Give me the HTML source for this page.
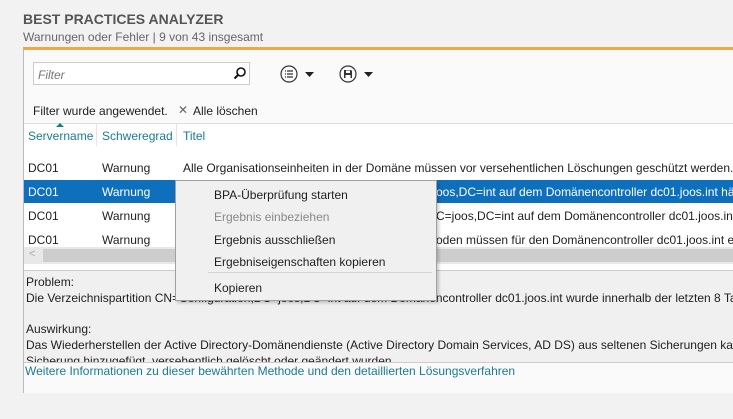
<!DOCTYPE html>
<html><head><meta charset="utf-8"><style>
body{margin:0;width:733px;height:419px;overflow:hidden;background:#f2f2f2;font-family:"Liberation Sans",sans-serif;font-size:12px;color:#1e1e1e;position:relative}
.a{position:absolute;white-space:nowrap}
</style></head><body>
<div class="a" style="left:23px;top:11px;font-weight:bold;font-size:14px;color:#555">BEST PRACTICES ANALYZER</div>
<div class="a" style="left:23px;top:30px;color:#666">Warnungen oder Fehler | 9 von 43 insgesamt</div>
<div class="a" style="left:23px;top:47px;width:720px;height:346px;background:#fafafa;border:1px solid #bbb;border-top:none;box-sizing:border-box"></div>
<div class="a" style="left:23px;top:47px;width:720px;height:3px;background:#efa941"></div>
<div class="a" style="left:33px;top:62px;width:217px;height:23px;background:#fff;border:1px solid #ccc;box-sizing:border-box"></div>
<div class="a" style="left:38px;top:68px;font-style:italic;color:#777">Filter</div>
<svg class="a" style="left:233px;top:66px" width="14" height="14"><circle cx="8" cy="6" r="4" fill="none" stroke="#111" stroke-width="1.6"/><path d="M5 9L1.5 12.5" stroke="#111" stroke-width="2"/></svg>
<svg class="a" style="left:279px;top:64px" width="40" height="20"><circle cx="10" cy="10" r="8" fill="none" stroke="#333" stroke-width="1.2"/><path d="M6 7h1M8 7h6M6 10h1M8 10h6M6 13h1M8 13h6" stroke="#333" stroke-width="1.2"/><path d="M26 8h9l-4.5 5z" fill="#222"/></svg>
<svg class="a" style="left:338px;top:64px" width="40" height="20"><circle cx="10" cy="10" r="8" fill="none" stroke="#333" stroke-width="1.2"/><path d="M6 6h7l1 1v7h-8z" fill="#333"/><rect x="8" y="6.5" width="4" height="2.5" fill="#fff"/><rect x="7.5" y="11" width="5" height="3" fill="#fff"/><path d="M26 8h9l-4.5 5z" fill="#222"/></svg>
<div class="a" style="left:33px;top:104px">Filter wurde angewendet.</div>
<div class="a" style="left:178px;top:103px;color:#666">✕</div>
<div class="a" style="left:193px;top:104px">Alle löschen</div>
<div class="a" style="left:24px;top:123px;width:719px;height:147px;background:#fff;border-top:1px solid #ddd"></div>
<div class="a" style="left:96px;top:124px;width:1px;height:22px;background:#e5e5e5"></div>
<div class="a" style="left:176px;top:124px;width:1px;height:22px;background:#e5e5e5"></div>
<svg class="a" style="left:56px;top:123px" width="8" height="5"><path d="M0 4L4 0L8 4z" fill="#1a7b8a"/></svg>
<div class="a" style="left:28px;top:129px;color:#1a7b94">Servername</div>
<div class="a" style="left:102px;top:129px;color:#1a7b94">Schweregrad</div>
<div class="a" style="left:183px;top:129px;color:#1a7b94">Titel</div>
<div class="a" style="left:28px;top:161px">DC01</div><div class="a" style="left:102px;top:161px">Warnung</div><div class="a" style="left:183px;top:161px">Alle Organisationseinheiten in der Domäne müssen vor versehentlichen Löschungen geschützt werden.</div>
<div class="a" style="left:24px;top:180px;width:719px;height:23px;background:#0e6fbd"></div>
<div class="a" style="left:28px;top:185px;color:#fff">DC01</div><div class="a" style="left:102px;top:185px;color:#fff">Warnung</div><div class="a" style="left:436px;top:185px;color:#fff">oos,DC=int auf dem Domänencontroller dc01.joos.int hä</div>
<div class="a" style="left:28px;top:209px">DC01</div><div class="a" style="left:102px;top:209px">Warnung</div><div class="a" style="left:436px;top:209px">C=joos,DC=int auf dem Domänencontroller dc01.joos.int</div>
<div class="a" style="left:28px;top:233px">DC01</div><div class="a" style="left:102px;top:233px">Warnung</div><div class="a" style="left:436px;top:233px">oden müssen für den Domänencontroller dc01.joos.int ei</div>
<div class="a" style="left:24px;top:247px;width:719px;height:17px;background:#e8e8e8"></div>
<div class="a" style="left:43px;top:249px;width:700px;height:13px;background:#cdcdcd"></div>
<div class="a" style="left:29px;top:248px;color:#aaa;font-size:11px">&lt;</div>
<div class="a" style="left:24px;top:270px;width:719px;height:92px;background:#f0f0f0;border-top:1px solid #ccc"></div>
<div class="a" style="left:26px;top:275px">Problem:</div>
<div class="a" style="left:26px;top:291px">Die Verzeichnispartition CN=Configuration,DC=joos,DC=int auf dem Domänencontroller dc01.joos.int wurde innerhalb der letzten 8 Tage</div>
<div class="a" style="left:26px;top:322px">Auswirkung:</div>
<div class="a" style="left:26px;top:338px">Das Wiederherstellen der Active Directory-Domänendienste (Active Directory Domain Services, AD DS) aus seltenen Sicherungen kann</div>
<div class="a" style="left:24px;top:352px;width:719px;height:10px;overflow:hidden;background:#f0f0f0"><div class="a" style="left:2px;top:2px">Sicherung hinzugefügt, versehentlich gelöscht oder geändert wurden.</div></div>
<div class="a" style="left:24px;top:362px;width:719px;height:30px;background:#fafafa;border-top:1px solid #ccc"></div>
<div class="a" style="left:25px;top:364px;color:#1a7b94">Weitere Informationen zu dieser bewährten Methode und den detaillierten Lösungsverfahren</div>
<div class="a" style="left:175px;top:180px;width:262px;height:121px;background:#f0f0f0;border:1px solid #a0a0a0;box-sizing:border-box;box-shadow:2px 2px 3px rgba(0,0,0,.2)"></div>
<div class="a" style="left:214px;top:188px">BPA-Überprüfung starten</div>
<div class="a" style="left:214px;top:210px;color:#888">Ergebnis einbeziehen</div>
<div class="a" style="left:214px;top:233px">Ergebnis ausschließen</div>
<div class="a" style="left:214px;top:255px">Ergebniseigenschaften kopieren</div>
<div class="a" style="left:208px;top:272px;width:224px;height:1px;background:#d5d5d5"></div>
<div class="a" style="left:214px;top:281px">Kopieren</div>
</body></html>
